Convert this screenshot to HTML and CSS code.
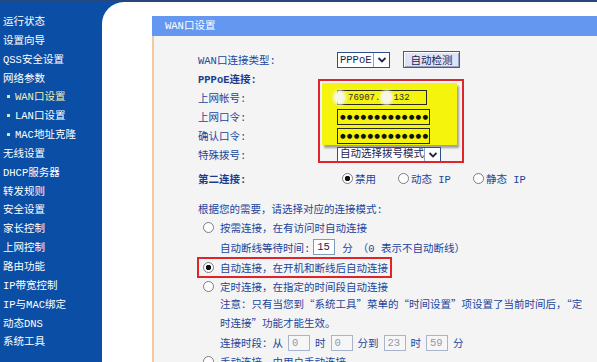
FILE: index.html
```html
<!DOCTYPE html>
<html lang="zh-CN">
<head>
    <meta charset="UTF-8">
    <meta name="viewport" content="width=device-width, initial-scale=1.0">
    <title>WAN口设置</title>
    <link rel="stylesheet" href="styles.css">
</head>
<body>
    <div class="page">
        <div class="menu">
            <a>运行状态</a>
            <a>设置向导</a>
            <a>QSS安全设置</a>
            <a>网络参数</a>
            <a class="sub active">WAN口设置</a>
            <a class="sub">LAN口设置</a>
            <a class="sub">MAC地址克隆</a>
            <a>无线设置</a>
            <a>DHCP服务器</a>
            <a>转发规则</a>
            <a>安全设置</a>
            <a>家长控制</a>
            <a>上网控制</a>
            <a>路由功能</a>
            <a>IP带宽控制</a>
            <a>IP与MAC绑定</a>
            <a>动态DNS</a>
            <a>系统工具</a>
        </div>

        <div class="main">
            <div class="panel">
                <div class="panel-title">WAN口设置</div>
                <div class="panel-body">
                    <!-- annotations drawn over the form -->
                    <div class="mark-yellow"></div>
                    <div class="mark-red"></div>

                    <div class="row">
                        <span class="label">WAN口连接类型:</span>
                        <div class="select select-type">
                            <span class="select-text">PPPoE</span>
                            <span class="select-arrow"><svg width="12" height="12" viewBox="0 0 12 12"><polyline points="2.5,4 6,7.5 9.5,4" fill="none" stroke="#1d2a4a" stroke-width="1.8"/></svg></span>
                        </div>
                        <button class="btn">自动检测</button>
                    </div>
                    <div class="row">
                        <b class="label">PPPoE连接:</b>
                    </div>
                    <div class="row">
                        <span class="label">上网帐号:</span>
                        <div class="field field-account">
                            <span class="smudge first"></span>76907.<span class="smudge"></span>132
                        </div>
                    </div>
                    <div class="row">
                        <span class="label">上网口令:</span>
                        <div class="field field-pass"><span class="dots">●●●●●●●●●●●●●</span></div>
                    </div>
                    <div class="row">
                        <span class="label">确认口令:</span>
                        <div class="field field-pass"><span class="dots">●●●●●●●●●●●●●</span></div>
                    </div>
                    <div class="row">
                        <span class="label">特殊拨号:</span>
                        <div class="select select-dial">
                            <span class="select-text">自动选择拨号模式</span>
                            <span class="select-arrow"><svg width="12" height="12" viewBox="0 0 12 12"><polyline points="2.5,4 6,7.5 9.5,4" fill="none" stroke="#1d2a4a" stroke-width="1.8"/></svg></span>
                        </div>
                    </div>

                    <div class="row row-second">
                        <b class="label">第二连接:</b>
                        <span class="choice first"><i class="radio checked"></i>禁用</span>
                        <span class="choice"><i class="radio"></i>动态 IP</span>
                        <span class="choice"><i class="radio"></i>静态 IP</span>
                    </div>

                    <div class="row row-intro">根据您的需要，请选择对应的连接模式:</div>
                    <div class="row opt"><i class="radio"></i>按需连接，在有访问时自动连接</div>
                    <div class="row sub-line line-wait">自动断线等待时间:<span class="box box-live">15</span>分<span class="hint">（0 表示不自动断线）</span></div>
                    <div class="row opt opt-marked"><i class="radio checked"></i>自动连接，在开机和断线后自动连接</div>
                    <div class="row opt opt-timed"><i class="radio"></i>定时连接，在指定的时间段自动连接</div>
                    <div class="note">注意：只有当您到<q>“系统工具”</q>菜单的<q>“时间设置”</q>项设置了当前时间后，<q>“定时连接”</q>功能才能生效。</div>
                    <div class="row sub-line">连接时段：从<span class="box">0</span>时<span class="box">0</span>分到<span class="box">23</span>时<span class="box">59</span>分</div>
                    <div class="row opt"><i class="radio"></i>手动连接，由用户手动连接</div>
                </div>
            </div>
        </div>
    </div>
</body>
</html>
```

FILE: styles.css
```css
* {
    box-sizing: border-box;
}

body {
    margin: 0;
    font-family: "Liberation Mono", "Noto Sans CJK SC", monospace;
    font-size: 10.5px;
    color: #22459c;
}

.page {
    display: flex;
    width: 597px;
    height: 362px;
    overflow: hidden;
    background: #0b4ea6;
    border-top: 1px solid #27467a;
}

/* left menu */
.menu {
    width: 102px;
    flex-shrink: 0;
    padding-top: 12px;
}

.menu a {
    display: block;
    height: 18.85px;
    line-height: 18.85px;
    padding-left: 3px;
    color: #fff;
    white-space: nowrap;
}

.menu .sub {
    padding-left: 2px;
}

.menu .sub::before {
    content: "";
    display: inline-block;
    width: 3px;
    height: 3px;
    margin: 0 5px 2px 5px;
    vertical-align: middle;
    background: #d2ecb0;
}

.menu .active {
    color: #f4efb2;
}

/* content */
.main {
    flex: 1;
    margin-top: 1px;
    background: #fff;
    border-top-left-radius: 22px;
    padding: 14px 0 0 50px;
}

.panel {
    height: 100%;
    display: flex;
    flex-direction: column;
}

.panel-title {
    height: 20px;
    line-height: 20px;
    padding-left: 13px;
    background: #6497f0;
    color: #fff;
}

.panel-body {
    flex: 1;
    position: relative;
    background: #f4f4f4;
    border-left: 2px solid #f7c89b;
    padding: 14px 0 0 44px;
}

.mark-yellow {
    position: absolute;
    left: 168px;
    top: 47px;
    width: 135px;
    height: 62px;
    background: #f4f40c;
    box-shadow: 2px 3px 2px rgba(60, 60, 60, 0.45);
}

.mark-red {
    position: absolute;
    left: 164px;
    top: 43px;
    width: 146px;
    height: 84px;
    border: 2px solid #e0242a;
    z-index: 2;
}

.row {
    position: relative;
    z-index: 1;
    display: flex;
    align-items: center;
    height: 19px;
    white-space: nowrap;
}

.label {
    width: 139px;
    flex-shrink: 0;
}

b.label,
.row-second b {
    color: #1b3c8e;
}

.select {
    display: flex;
    align-items: stretch;
    height: 16px;
    background: #fff;
    border: 1px solid #2f4f93;
    color: #1a2450;
}

.select-text {
    padding-left: 2px;
    line-height: 14px;
}

.select-type .select-text {
    width: 35px;
}

.select-dial {
    height: 15px;
}

.select-dial .select-text {
    width: 86px;
    line-height: 13px;
}

.select-arrow {
    width: 16px;
    display: flex;
    align-items: center;
    justify-content: center;
    border-left: 1px solid #8fa6cc;
    background: #fff;
}

.btn {
    margin-left: 13px;
    width: 57px;
    height: 17px;
    padding: 0;
    font: inherit;
    color: #1a2450;
    background: #dfe3f8;
    border: 1px solid #4d5a7c;
    box-shadow: inset 1px 1px #fff, inset -1px -1px #9aa6c6;
}

.field {
    display: flex;
    align-items: center;
    height: 16px;
    background: #f4f40c;
    border: 1px solid #2a2a1a;
    color: #2a2a40;
    overflow: hidden;
}

.field-account {
    width: 90px;
    height: 15px;
    font-size: 9px;
    overflow: visible;
}

.smudge {
    display: inline-block;
    width: 13px;
    height: 15px;
    border-radius: 50%;
    background: #f6f6ee;
    filter: blur(1.5px);
}

.smudge.first {
    margin-left: -5px;
    margin-right: 2px;
}

.field-pass {
    width: 93px;
}

.dots {
    padding-left: 2px;
    font-family: "DejaVu Sans", sans-serif;
    font-size: 6.5px;
    letter-spacing: 1.2px;
    color: #111;
}

/* second connection */
.row-second {
    margin-top: 5px;
}

.choice {
    display: flex;
    align-items: center;
    gap: 2px;
    margin-left: 22px;
}

.choice.first {
    margin-left: 5px;
}

.radio {
    display: inline-block;
    width: 11px;
    height: 11px;
    border-radius: 50%;
    border: 1px solid #7c7c86;
    background: #fff;
    flex-shrink: 0;
}

.radio.checked {
    background: radial-gradient(circle, #111 0 2.4px, #fff 3px);
}

.row-intro {
    margin-top: 11px;
}

.opt .radio {
    margin: 0 6px 0 5px;
}

.line-wait {
    height: 20px;
}

.sub-line {
    padding-left: 22px;
}

.opt-marked {
    height: 21px;
    width: 195px;
    margin-left: -1px;
    border: 2px solid #e0242a;
}

.opt-marked .radio {
    margin-left: 4px;
}

.opt-timed {
    height: 17px;
}

.note {
    padding-left: 22px;
    line-height: 17px;
    width: 386px;
}

.note q {
    quotes: none;
    font-family: "Noto Sans CJK SC", sans-serif;
    font-feature-settings: "fwid";
}

.box {
    display: inline-block;
    width: 22px;
    height: 16px;
    line-height: 14px;
    margin: 0 5px;
    padding-left: 3px;
    background: #f6f6f6;
    border: 1px solid #a7b4cc;
    color: #8e99ad;
}

.box-live {
    margin: 0 7px 0 3px;
    background: #fff;
    border-color: #7f9db9;
    color: #1a2450;
}

.hint {
    margin-left: 5px;
}
```
